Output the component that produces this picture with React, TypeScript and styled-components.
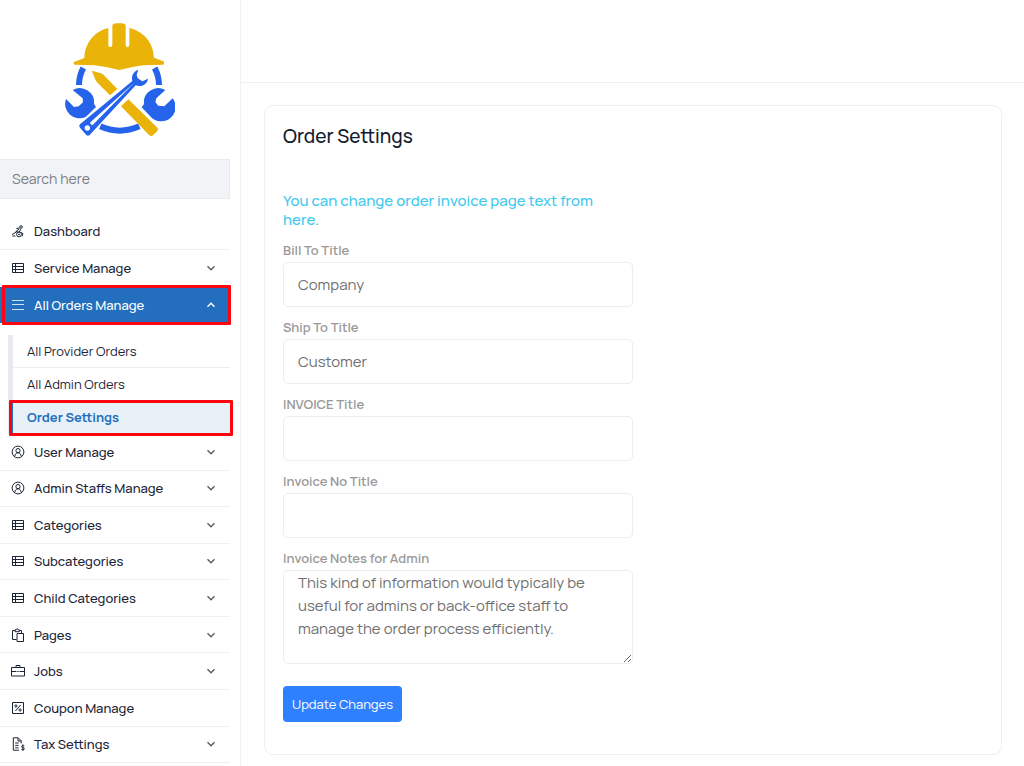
import React from "react";
import styled, { createGlobalStyle, css } from "styled-components";

const GlobalStyle = createGlobalStyle`
  *, *::before, *::after { box-sizing: border-box; }
  body {
    margin: 0;
    background: #fff;
    color: #1b2437;
    font-family: Manrope, Inter, "Liberation Sans", sans-serif;
  }
  ul { list-style: none; margin: 0; padding: 0; }
  button, input, textarea { font-family: inherit; }
`;

const Shell = styled.div`
  display: flex;
  min-height: 100vh;
`;

const Sidebar = styled.aside`
  display: flex;
  flex-direction: column;
  flex: 0 0 241px;
  padding: 0 10px 3px 0;
  border-right: 1px solid #f0f0f5;
`;

const LogoArea = styled.div`
  display: flex;
  justify-content: center;
  padding: 22px 0 19px 10px;
`;

const SearchInput = styled.input`
  width: 100%;
  height: 40px;
  margin-bottom: 14px;
  padding: 0 12px 2px;
  border: 1px solid #e8eaee;
  border-left: 0;
  border-radius: 0;
  background: #f2f3f7;
  font-size: 14px;
  outline: none;
  &::placeholder { color: #7b7d82; opacity: 1; }
`;

const Nav = styled.nav`
  display: flex;
  flex: 1;
  flex-direction: column;
`;

const Menu = styled.ul<{ $grow?: boolean }>`
  display: flex;
  flex-direction: column;
  ${(p) => p.$grow && css`flex: 1;`}
`;

const MenuItem = styled.li<{ $grow?: boolean }>`
  display: flex;
  flex-direction: column;
  ${(p) => p.$grow && css`flex: 1;`}
`;

const highlight = css`
  position: relative;
  &::after {
    content: "";
    position: absolute;
    border: 3px solid #fb0510;
    border-radius: 1px;
    pointer-events: none;
  }
`;

const MenuLink = styled.a<{ $active?: boolean; $tall?: boolean }>`
  display: flex;
  flex: 1;
  align-items: center;
  gap: 9px;
  min-height: ${(p) => (p.$tall ? 37 : 36)}px;
  padding: 0 13px 0 11px;
  border-bottom: 1px solid #eef0f3;
  color: inherit;
  font-size: 13px;
  font-weight: 500;
  line-height: 18px;
  text-decoration: none;
  ${(p) =>
    p.$active &&
    css`
      ${highlight}
      border-bottom: 0;
      background: #246fbd;
      color: #fff;
      &::after { inset: -2px -1px -2px 2px; }
    `}
`;

const MenuLabel = styled.span`
  flex: 1;
  white-space: nowrap;
`;

const Submenu = styled.ul`
  margin: 12px 0 0 8px;
  border-left: 5px solid #e9e9f0;
`;

const SubLink = styled.a<{ $active?: boolean }>`
  display: flex;
  align-items: center;
  height: 33px;
  padding-left: 14px;
  border-bottom: 1px solid #e8eff5;
  color: inherit;
  font-size: 13px;
  text-decoration: none;
  ${(p) =>
    p.$active &&
    css`
      ${highlight}
      background: #e8f1f8;
      box-shadow: -2px 0 0 #246fbd;
      color: #246fbd;
      font-weight: 700;
      &::after { inset: -1px -3px -3px -4px; }
    `}
`;

const Main = styled.main`
  flex: 1;
  min-width: 0;
`;

const TopBar = styled.header`
  height: 83px;
  border-bottom: 1px solid #f0f0f5;
`;

const Card = styled.section`
  margin: 22px 22px 11px 23px;
  padding: 18px 18px 32px;
  border: 1px solid #efeff4;
  border-radius: 9px;
`;

const Title = styled.h1`
  margin: 0 0 43px;
  font-size: 19px;
  font-weight: 500;
  line-height: 24px;
  color: #111a2e;
`;

const Form = styled.form`
  display: flex;
  flex-direction: column;
  align-items: flex-start;
  width: 50%;
`;

const Info = styled.p`
  margin: 0 0 11px;
  padding-right: 16px;
  color: #43c9ee;
  font-size: 15px;
  font-weight: 500;
  line-height: 19px;
`;

const Field = styled.div`
  display: flex;
  flex-direction: column;
  gap: 2px;
  width: 100%;
  margin-bottom: 10px;
`;

const Label = styled.label`
  color: #999;
  font-size: 13px;
  font-weight: 600;
  line-height: 20px;
`;

const control = css`
  width: 100%;
  border: 1px solid #ededf1;
  border-radius: 5px;
  background: #fff;
  color: #707070;
  font-size: 15px;
  outline: none;
`;

const TextInput = styled.input`
  ${control}
  height: 45px;
  padding: 0 14px;
`;

const TextArea = styled.textarea`
  ${control}
  display: block;
  height: 94px;
  padding: 0 14px;
  line-height: 23px;
  resize: vertical;
`;

const SubmitButton = styled.button`
  height: 36px;
  margin-top: 12px;
  padding: 0 9px;
  border: 0;
  border-radius: 4px;
  background: #2f80ff;
  color: #fff;
  font-size: 13px;
  white-space: nowrap;
`;

const Glyph = styled.svg`
  flex: none;
  width: 14px;
  height: 14px;
  fill: none;
  stroke: currentColor;
`;

const ChevronSvg = styled.svg<{ $up?: boolean }>`
  flex: none;
  width: 12px;
  height: 12px;
  fill: none;
  stroke: ${(p) => (p.$up ? "#fff" : "#555b66")};
  ${(p) => p.$up && css`transform: rotate(180deg);`}
`;

type IconName = "dashboard" | "table" | "bars" | "user" | "pages" | "jobs" | "coupon" | "tax";

const drawings: Record<IconName, React.ReactNode> = {
  dashboard: (
    <>
      <circle cx="10" cy="3" r="1.3" />
      <path d="M8.6 4.6 4.8 7.6l3.4.6M9.8 5.2 8.2 8.2M5.4 4.6 8 4M1 10.6l4.4-2.6M1.4 12h3" />
      <circle cx="8" cy="10.4" r="2.4" />
      <path d="M10 8.4l2 1.4-1 2.6M7 10.4h2" />
    </>
  ),
  table: <path d="M1.5 2.5h11v9h-11zM1.5 5.5h11M1.5 8.5h11M4.5 2.5v9" />,
  bars: <path d="M1 2.5h12M1 6.5h12M1 11.5h12" opacity=".8" />,
  user: (
    <>
      <circle cx="7" cy="7" r="5.9" />
      <circle cx="7" cy="5.6" r="2.1" />
      <path d="M3.9 11.2c0-2 1.3-3.4 3.1-3.4s3.1 1.4 3.1 3.4" />
    </>
  ),
  pages: (
    <>
      <path d="M5.5 11.5h-4v-9h2.6M8.4 2.5h2.1V5M4 1.8h1.2a1 1 0 0 1 2 0h1.2v1.9H4z" />
      <path d="M6 5.5h6.5v8H6z" />
    </>
  ),
  jobs: <path d="M.5 3.5h13V12H.5zM5 3.5v-2h4v2M.5 7.5h5M8.5 7.5h5M6.3 7.5h1.4" />,
  coupon: (
    <>
      <path d="M1.5 1.5h11v11h-11zM9.6 4 4.4 10" />
      <circle cx="4.9" cy="5" r="1.1" />
      <circle cx="9.1" cy="9" r="1.1" />
    </>
  ),
  tax: (
    <>
      <path d="M8 13.2H2.3V.8h4.9l3 3v2.6M7 1v3h3M4.2 6h3.4M4.2 8.4h3.4M4.2 10.8h3.4" />
      <path d="M13.3 9c-.6-.7-2.8-.7-2.8.6 0 1.4 2.9.8 2.9 2.2 0 1.2-2.3 1.3-3 .4M11.9 7.4v6.4" />
    </>
  ),
};

const Icon = ({ name }: { name: IconName }) => (
  <Glyph viewBox="0 0 14 14" aria-hidden="true">{drawings[name]}</Glyph>
);

const Chevron = ({ up }: { up?: boolean }) => (
  <ChevronSvg $up={up} viewBox="0 0 12 12" strokeWidth="1.4" aria-hidden="true">
    <path d="M2.5 4.3 6 7.7 9.5 4.3" />
  </ChevronSvg>
);

const Logo = () => (
  <svg width="110" height="118" viewBox="45 36 330 354" role="img" aria-label="Workshop logo">
    <g fill="none" stroke="#2563eb" strokeWidth="18">
      <path d="M100 174Q87 198 87 225" />
      <path d="M314 174Q327 198 327 225" />
      <path d="M151 349Q208 375 268 349" />
    </g>
    <g fill="#2563eb">
      <path d="M68 240A43 43 0 0 1 132 282L138 291 108 320A43 43 0 0 1 48 267L72 291 86 289 99 277 98 265Z" />
      <path d="M346 240A43 43 0 0 0 282 282L275 292 302 320A43 43 0 0 0 368 265L343 289 325 287 316 276 319 265Z" />
    </g>
    <path fill="#eab308" d="M125 182L153 190Q161 194 167 201L202 237L180 256L141 217Q136 212 134 203Z" />
    <path fill="#eab308" d="M235 268L323 354Q326 359 321 364L309 376Q304 381 298 376L213 289Z" />
    <path
      fill="#2563eb"
      d="M265 179C250 184 243 198 247 213L90 343Q85 348 90 353L109 375Q114 380 119 375L257 226C272 232 291 225 294 206L277 214L263 205L260 194Z"
    />
    <path fill="#fff" d="M121 337 252 219 128 345Q120 345 121 337Z" />
    <circle cx="112" cy="354" r="8" fill="#fff" />
    <path
      fill="#eab308"
      d="M187 48Q187 40 199 40H215Q227 40 227 48V105Q227 111 232 111Q238 111 238 105V54C281 64 310 98 312 143L340 154Q344 156 342 160L340 164L281 166Q240 171 208 180Q174 171 134 166L74 164Q68 160 72 156L103 144C105 98 133 64 175 54V105Q175 111 181 111Q187 111 187 105Z"
    />
  </svg>
);

type Entry = { label: string; icon: IconName; expandable?: boolean };

const topEntries: Entry[] = [
  { label: "Dashboard", icon: "dashboard" },
  { label: "Service Manage", icon: "table", expandable: true },
];

const lowerEntries: Entry[] = [
  { label: "User Manage", icon: "user", expandable: true },
  { label: "Admin Staffs Manage", icon: "user", expandable: true },
  { label: "Categories", icon: "table", expandable: true },
  { label: "Subcategories", icon: "table", expandable: true },
  { label: "Child Categories", icon: "table", expandable: true },
  { label: "Pages", icon: "pages", expandable: true },
  { label: "Jobs", icon: "jobs", expandable: true },
  { label: "Coupon Manage", icon: "coupon" },
  { label: "Tax Settings", icon: "tax", expandable: true },
];

const Row = ({ entry, grow }: { entry: Entry; grow?: boolean }) => (
  <MenuItem $grow={grow}>
    <MenuLink href="#" $tall={!grow}>
      <Icon name={entry.icon} />
      <MenuLabel>{entry.label}</MenuLabel>
      {entry.expandable && <Chevron />}
    </MenuLink>
  </MenuItem>
);

const fields = [
  { id: "bill", label: "Bill To Title", value: "Company" },
  { id: "ship", label: "Ship To Title", value: "Customer" },
  { id: "invoice", label: "INVOICE Title", value: "" },
  { id: "invoiceNo", label: "Invoice No Title", value: "" },
];

const notes =
  "This kind of information would typically be useful for admins or back-office staff to manage the order process efficiently.";

export default function App() {
  return (
    <>
      <GlobalStyle />
      <Shell>
        <Sidebar>
          <LogoArea>
            <Logo />
          </LogoArea>
          <SearchInput type="search" placeholder="Search here" aria-label="Search here" />
          <Nav>
            <Menu>
              {topEntries.map((e) => (
                <Row key={e.label} entry={e} />
              ))}
              <MenuItem>
                <MenuLink href="#" $active>
                  <Icon name="bars" />
                  <MenuLabel>All Orders Manage</MenuLabel>
                  <Chevron up />
                </MenuLink>
                <Submenu>
                  <li><SubLink href="#">All Provider Orders</SubLink></li>
                  <li><SubLink href="#">All Admin Orders</SubLink></li>
                  <li><SubLink href="#" $active>Order Settings</SubLink></li>
                </Submenu>
              </MenuItem>
            </Menu>
            <Menu $grow>
              {lowerEntries.map((e) => (
                <Row key={e.label} entry={e} grow />
              ))}
            </Menu>
          </Nav>
        </Sidebar>
        <Main>
          <TopBar />
          <Card>
            <Title>Order Settings</Title>
            <Form onSubmit={(e) => e.preventDefault()}>
              <Info>You can change order invoice page text from here.</Info>
              {fields.map((f) => (
                <Field key={f.id}>
                  <Label htmlFor={f.id}>{f.label}</Label>
                  <TextInput id={f.id} type="text" defaultValue={f.value} />
                </Field>
              ))}
              <Field>
                <Label htmlFor="notes">Invoice Notes for Admin</Label>
                <TextArea id="notes" defaultValue={notes} />
              </Field>
              <SubmitButton type="submit">Update Changes</SubmitButton>
            </Form>
          </Card>
        </Main>
      </Shell>
    </>
  );
}
